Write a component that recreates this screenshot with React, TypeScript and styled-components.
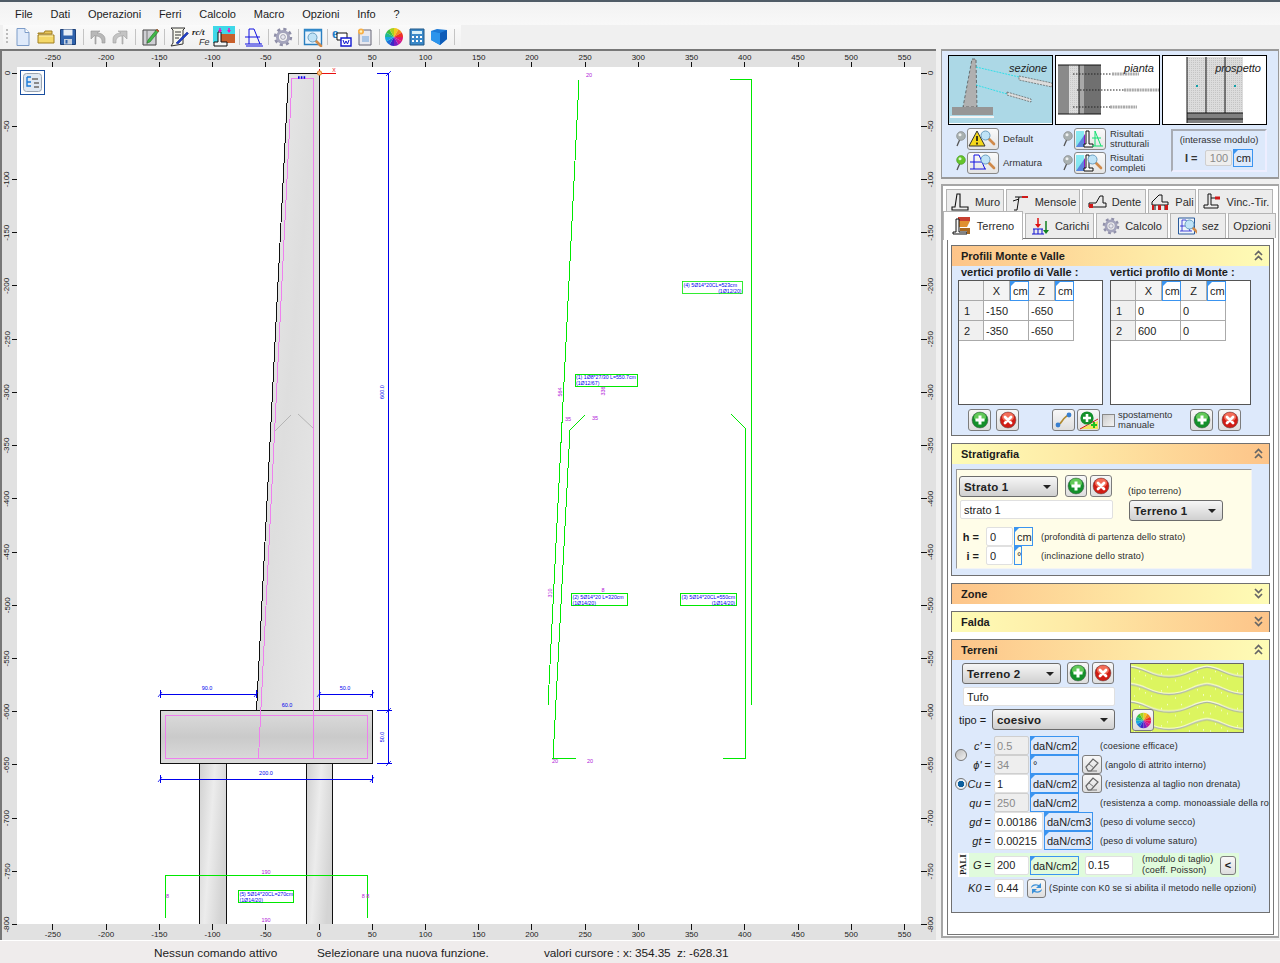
import React from 'react';
import styled, { createGlobalStyle } from 'styled-components';

const GlobalStyle = createGlobalStyle`
    html, body { margin: 0; padding: 0; background: #f0f0f0; }
    * { box-sizing: border-box; }
    body { font-family: "Liberation Sans", Arial, sans-serif; font-size: 11px; color: #1c1c1c; }
`;

/* ---------- small drawn icons ---------- */
const Ball = ({ hi, lo, cross }: { hi: string; lo: string; cross?: boolean }) => (
    <svg width="18" height="18" viewBox="0 0 18 18">
        <circle cx="9" cy="9" r="8" fill={lo} stroke="#555" strokeWidth=".5" />
        <ellipse cx="9" cy="6" rx="6" ry="4.5" fill={hi} opacity=".75" />
        {cross ? (
            <path d="M6 6l6 6M12 6l-6 6" stroke="#fff" strokeWidth="2.8" strokeLinecap="round" />
        ) : (
            <path d="M9 4.5v9M4.5 9h9" stroke="#fff" strokeWidth="3" />
        )}
    </svg>
);
const AddBall = () => <Ball hi="#7fdc6a" lo="#13902a" />;
const DelBall = () => <Ball hi="#ff8a70" lo="#d01c14" cross />;

const Gear = ({ size = 20 }: { size?: number }) => (
    <svg width={size} height={size} viewBox="0 0 20 20">
        <circle cx="10" cy="10" r="7.5" fill="none" stroke="#8f8fa8" strokeWidth="3.4" strokeDasharray="3 2.9" />
        <circle cx="10" cy="10" r="5.6" fill="none" stroke="#a4a4bc" strokeWidth="3" />
        <circle cx="10" cy="10" r="2.4" fill="#e8e8f0" stroke="#77778f" strokeWidth=".6" />
    </svg>
);
const wheelColors = ['#f2c81e', '#f28a1e', '#ee3124', '#e0186a', '#c8189a', '#7a1cc0', '#3a28c8', '#1c70d8', '#18a8e0', '#20b890', '#3cc040', '#a8d020'];
const Wheel = ({ size = 20 }: { size?: number }) => (
    <svg width={size} height={size} viewBox="0 0 20 20">
        {wheelColors.map((c, i) => {
            const a = (i * Math.PI) / 6;
            const b = ((i + 1) * Math.PI) / 6;
            const pt = (t: number) => `${10 + 9 * Math.sin(t)} ${10 - 9 * Math.cos(t)}`;
            return <path key={c} d={`M10 10L${pt(a)}A9 9 0 0 1 ${pt(b)}z`} fill={c} />;
        })}
    </svg>
);
const Lens = ({ x, y }: { x: number; y: number }) => (
    <g transform={`translate(${x} ${y})`}>
        <path d="M7 7l6 6" stroke="#d08a4a" strokeWidth="2.6" strokeLinecap="round" />
        <circle cx="4.5" cy="4.5" r="4.5" fill="#bfe3f7" stroke="#6a9ec0" />
    </g>
);
const Pin = ({ on }: { on?: boolean }) => (
    <svg width="11" height="16" viewBox="0 0 11 16">
        <path d="M5 8L2 15" stroke="#555" strokeWidth="1.3" />
        <circle cx="6" cy="5" r="4.4" fill={on ? '#63c52c' : '#a8b0b0'} stroke={on ? '#3c8a18' : '#777'} strokeWidth=".5" />
        <circle cx="5" cy="3.8" r="1.5" fill="#fff" opacity=".8" />
    </svg>
);
const WallGlyph = ({ color = '#111' }: { color?: string }) => (
    <svg width="20" height="20" viewBox="0 0 20 20">
        <path d="M7 2h3v13h8v3H2v-3h3z" fill="none" stroke={color} strokeWidth="1.1" />
    </svg>
);
const Eraser = () => (
    <svg width="16" height="16" viewBox="0 0 16 16">
        <path d="M2 10l7-8 5 4-7 8H4z" fill="none" stroke="#666" strokeWidth="1.2" />
        <path d="M5 7l5 4M4 14h9" stroke="#777" />
    </svg>
);

const toolbarIcons: Record<string, React.ReactNode> = {
    doc: (
        <svg width="20" height="20" viewBox="0 0 20 20">
            <path d="M4 1.5h8l4 4v13H4z" fill="#dfeafa" stroke="#7d9cc8" />
            <path d="M12 1.5v4h4" fill="#fff" stroke="#7d9cc8" />
        </svg>
    ),
    open: (
        <svg width="20" height="20" viewBox="0 0 20 20">
            <path d="M2 6h6l1-2h7v3H2z" fill="#e8c65c" stroke="#a07f20" />
            <path d="M2 16V8h16v8z" fill="#f4d868" stroke="#a07f20" />
            <path d="M3 9h14" stroke="#fff3b8" />
        </svg>
    ),
    save: (
        <svg width="20" height="20" viewBox="0 0 20 20">
            <path d="M2.5 2.5h15v15h-15z" fill="#2f62ac" stroke="#1d4078" />
            <path d="M5.5 2.5h9v6h-9z" fill="#e8eef6" />
            <path d="M6 12h8v5.5H6z" fill="#c4d0e0" />
            <path d="M7.5 13h2v3.5h-2z" fill="#2f62ac" />
        </svg>
    ),
    undo: (
        <svg width="20" height="20" viewBox="0 0 20 20">
            <path d="M7 17V8l-4 4V4h9l-3 2c5 0 8 3 8 6v4h-3v-2c0-3-3-5-6-5v8z" fill="#b8b8b8" stroke="#949494" strokeWidth=".6" />
        </svg>
    ),
    redo: (
        <svg width="20" height="20" viewBox="0 0 20 20">
            <path d="M13 17V8l4 4V4H8l3 2c-5 0-8 3-8 6v4h3v-2c0-3 3-5 6-5v8z" fill="#c4c4c4" stroke="#a0a0a0" strokeWidth=".6" />
        </svg>
    ),
    edit: (
        <svg width="20" height="20" viewBox="0 0 20 20">
            <path d="M3 3h13v15H3z" fill="#cfcfd4" stroke="#444" />
            <path d="M7 3v15" stroke="#777" />
            <path d="M8 13L17 2l2 2-9 11-3 1z" fill="#42b848" stroke="#226b28" strokeWidth=".6" />
            <path d="M16 3l2 2 1-1-2-2z" fill="#d83c30" />
        </svg>
    ),
    script: (
        <svg width="22" height="22" viewBox="0 0 22 22">
            <path d="M3 2h14l-2 2v14l-12 2 2-3V4z" fill="#f8f8ee" stroke="#333" />
            <path d="M7 6h6M7 9h6M7 12h4" stroke="#333" />
            <path d="M8 17L19 6l1.5 1.5L10 18z" fill="#2040c8" stroke="#102080" strokeWidth=".5" />
        </svg>
    ),
    rcfe: (
        <svg width="22" height="22" viewBox="0 0 22 22">
            <text x="1" y="9" fontSize="9" fontStyle="italic" fontWeight="700" fontFamily="Liberation Serif, serif" fill="#222">rc/t</text>
            <text x="8" y="19" fontSize="9" fontStyle="italic" fontFamily="Liberation Sans, sans-serif" fill="#333">Fe</text>
        </svg>
    ),
    terrain: (
        <svg width="22" height="22" viewBox="0 0 22 22">
            <path d="M0 0h22v17H0z" fill="#3fd8e8" />
            <path d="M6 8h16v9H8z" fill="#c8602c" />
            <path d="M5 6h3v10h6v4H1v-4h4z" fill="#f4f4f4" stroke="#111" />
            <path d="M7 2v4M16 2v4" stroke="#ee10c0" strokeWidth="1.4" />
            <path d="M5 4l2 3 2-3zM14 4l2 3 2-3z" fill="#ee10c0" />
        </svg>
    ),
    wall: (
        <svg width="20" height="20" viewBox="0 0 20 20">
            <path d="M5 2h5l6 15M5 2v15M1 10h15M1 17h17M2 19h17" fill="none" stroke="#1010e0" strokeWidth="1" />
        </svg>
    ),
    gear: <Gear />,
    search: (
        <svg width="20" height="20" viewBox="0 0 20 20">
            <path d="M1.5 2.5h17v15h-17z" fill="#eaf4fc" stroke="#2a7fc0" strokeWidth="1.4" />
            <path d="M1.5 2.5h17v2h-17z" fill="#3890d0" />
            <Lens x={5} y={6} />
        </svg>
    ),
    word: (
        <svg width="22" height="22" viewBox="0 0 22 22">
            <text x="1" y="12" fontSize="14" fontWeight="700" fontFamily="Liberation Serif, serif" fill="#2480c8">e</text>
            <path d="M6 7h10v7H6z" fill="#fff" stroke="#111" />
            <path d="M10 12h10v8H10z" fill="#fff" stroke="#1018d0" strokeWidth="1.4" />
            <path d="M12 14l1.5 4 1.5-3 1.5 3 1.5-4" fill="none" stroke="#1018d0" />
        </svg>
    ),
    page: (
        <svg width="20" height="20" viewBox="0 0 20 20">
            <path d="M4 3h12v15H4z" fill="#e8e8ee" stroke="#667" />
            <path d="M7 9h7v6H7z" fill="#a8c4e4" />
            <circle cx="6" cy="4.5" r="3" fill="#f8b048" />
            <circle cx="6" cy="4.5" r="1.2" fill="#fff4c0" />
        </svg>
    ),
    color: <Wheel />,
    calc: (
        <svg width="20" height="20" viewBox="0 0 20 20">
            <path d="M3 2h14v16H3z" fill="#3a88c8" stroke="#205888" />
            <path d="M5 4h10v3H5z" fill="#d8f0f8" />
            <path d="M5 9h2v2H5zM9 9h2v2H9zM13 9h2v2h-2zM5 13h2v2H5zM9 13h2v2H9zM13 13h2v2h-2z" fill="#fff" />
        </svg>
    ),
    cube: (
        <svg width="20" height="20" viewBox="0 0 20 20">
            <path d="M2 4l6-2 10 1v9l-7 6-9-5z" fill="#1c7ad8" />
            <path d="M2 4l9 2 7-3v9l-7 6z" fill="#0e5cb8" />
            <path d="M2 4l9 2v12l-9-5z" fill="#2c94ec" />
        </svg>
    ),
};

/* ---------- the CAD sheet ---------- */
const px = (x: number) => 319 + x * 1.0645;
const pz = (z: number) => 73 - z * 1.0645;
const xTicks = Array.from({ length: 17 }, (_, i) => -250 + i * 50);
const zTicks = Array.from({ length: 17 }, (_, i) => -i * 50);
const BLUE = '#0000ee';
const GREEN = '#00e800';
const PINK = '#ee80ee';
const MAGENTA = '#b020d8';

const SheetSvg = styled.svg`
    display: block;
    font-family: "Liberation Sans", sans-serif;
`;
const Lbl = ({ x, y, c = BLUE, r, t }: { x: number; y: number; c?: string; r?: boolean; t: string }) => (
    <text x={x} y={y} fontSize="5.5" fill={c} textAnchor="middle" transform={r ? `rotate(-90 ${x} ${y})` : undefined}>
        {t}
    </text>
);
const BarTag = ({ x, y, w, a, b, right }: { x: number; y: number; w: number; a: string; b: string; right?: boolean }) => (
    <g>
        <rect x={x} y={y} width={w} height={12} fill="#fff" stroke={GREEN} strokeWidth="1" shapeRendering="crispEdges" />
        <text x={x + 1} y={y + 5} fontSize="5.2" fill={BLUE}>{a}</text>
        <text x={right ? x + w - 1 : x + 1} y={y + 11} fontSize="5.2" fill={BLUE} textAnchor={right ? 'end' : 'start'}>{b}</text>
    </g>
);

const Sheet = () => (
    <SheetSvg width="934" height="889" viewBox="2 51 934 889">
        <defs>
            <linearGradient id="wallFill" x1="0" y1="0" x2="1" y2="1">
                <stop offset="0" stopColor="#ececec" />
                <stop offset=".5" stopColor="#dedede" />
                <stop offset="1" stopColor="#e8e8e8" />
            </linearGradient>
            <linearGradient id="footFill" x1="0" y1="0" x2="0" y2="1">
                <stop offset="0" stopColor="#dcdcdc" />
                <stop offset=".5" stopColor="#cacaca" />
                <stop offset="1" stopColor="#dcdcdc" />
            </linearGradient>
            <linearGradient id="pileFill" x1="0" y1="0" x2="1" y2=".4">
                <stop offset="0" stopColor="#d0d0d0" />
                <stop offset=".5" stopColor="#ececec" />
                <stop offset="1" stopColor="#d4d4d4" />
            </linearGradient>
        </defs>
        <rect x="2" y="51" width="934" height="889" fill="#e1e1e1" />
        <rect x="17" y="67" width="904" height="857" fill="#fff" />

        {xTicks.map((v) => (
            <g key={v}>
                <path d={`M${px(v)} 61.5V67M${px(v)} 924V929.5`} stroke="#111" strokeWidth="1" shapeRendering="crispEdges" />
                <text x={px(v)} y="60" fontSize="8" fill="#222" textAnchor="middle">{v}</text>
                <text x={px(v)} y="937" fontSize="8" fill="#222" textAnchor="middle">{v}</text>
            </g>
        ))}
        {zTicks.map((v) => (
            <g key={v}>
                <path d={`M11.5 ${pz(v)}H17M921 ${pz(v)}H926.5`} stroke="#111" strokeWidth="1" shapeRendering="crispEdges" />
                <text x="9.5" y={pz(v)} fontSize="8" fill="#222" textAnchor="middle" transform={`rotate(-90 9.5 ${pz(v)})`}>{v}</text>
                <text x="933" y={pz(v)} fontSize="8" fill="#222" textAnchor="middle" transform={`rotate(-90 933 ${pz(v)})`}>{v}</text>
            </g>
        ))}

        {/* piles */}
        <rect x="199.5" y="763" width="27" height="161" fill="url(#pileFill)" />
        <rect x="306.5" y="763" width="26" height="161" fill="url(#pileFill)" />
        <path d="M199.5 763V924M226.5 763V924M306.5 763V924M332.5 763V924" stroke="#111" strokeWidth="1" shapeRendering="crispEdges" />

        {/* wall and footing */}
        <path d="M288 73H319V711H256.5z" fill="url(#wallFill)" />
        <path d="M319.5 73.5H288.5L256.5 711M319.5 73.5V711" fill="none" stroke="#111" strokeWidth="1" shapeRendering="crispEdges" />
        <rect x="160.5" y="710.5" width="212" height="53" fill="url(#footFill)" stroke="#111" strokeWidth="1" shapeRendering="crispEdges" />
        <path d="M292 78.5H313.5V758M292 78.5L258.5 758M165.5 715.5H367.5V758.5H165.5z" fill="none" stroke={PINK} strokeWidth="1" shapeRendering="crispEdges" />
        <path d="M275 431L291 415M298 414L313 428" stroke="#aaa" strokeWidth=".8" />
        <path d="M298 77.5h8" stroke={BLUE} strokeWidth="2.4" strokeDasharray="1.6 1.2" />

        {/* axes */}
        <path d="M319 73.5H336M319.5 69V73" stroke="#e81010" strokeWidth="1" shapeRendering="crispEdges" />
        <circle cx="319.5" cy="73" r="2.2" fill="#f8c080" stroke="#e07010" strokeWidth=".8" />
        <text x="334" y="72" fontSize="7" fill="#f04040" textAnchor="middle">x</text>

        {/* dimensions */}
        <g stroke={BLUE} strokeWidth="1" fill="none" shapeRendering="crispEdges">
            <path d="M377 73.5H389M388.5 73V763M377 710.5H392M377 763.5H392" />
            <path d="M160 694.5H256M319 694.5H372M160 779.5H372" />
            <path d="M160.5 690V698M256.5 690V698M319.5 690V698M372.5 690V698M160.5 775V783M372.5 775V783" />
        </g>
        <path d="M386 76l5-5M386 713l5-5M386 766l5-5M158 697l4-5M254 697l4-5M317 697l4-5M370 697l4-5M158 782l4-5M370 782l4-5" stroke={BLUE} strokeWidth=".8" />
        <Lbl x={207} y={690} t="90.0" />
        <Lbl x={345} y={690} t="50.0" />
        <Lbl x={287} y={707} t="60.0" />
        <Lbl x={266} y={775} t="200.0" />
        <Lbl x={384} y={392} r t="600.0" />
        <Lbl x={384} y={737} r t="50.0" />

        {/* stirrup under the footing */}
        <path d="M165.5 918V875.5H367.5V918" fill="none" stroke={GREEN} strokeWidth="1" shapeRendering="crispEdges" />
        <BarTag x={238.5} y={890.5} w={55} a="(5) 5Ø14*20CL=270cm" b="          (1Ø14/20)" />
        <Lbl x={266} y={874} c={MAGENTA} t="190" />
        <Lbl x={266} y={922} c={MAGENTA} t="190" />
        <Lbl x={167.5} y={898} c={MAGENTA} t="8" />
        <Lbl x={365.5} y={898} c={MAGENTA} t="8 8" />

        {/* rebars */}
        <g stroke={GREEN} strokeWidth="1" fill="none" shapeRendering="crispEdges">
            <path d="M579 80L548 705" />
            <path d="M585 415L570 430L553 758.5H576" />
            <path d="M730 79.5H751.5V705" />
            <path d="M731 414L745.5 428.5V758.5H723" />
        </g>
        <rect x="682.5" y="281.5" width="60" height="12" fill="#fff" stroke={GREEN} strokeWidth=".8" />
        <text x="683.5" y="286.5" fontSize="5.2" fill={BLUE}>(4) 5Ø14*20CL=523cm</text>
        <text x="741.5" y="292.5" fontSize="5.2" fill={BLUE} textAnchor="end">(1Ø12/20)</text>
        <BarTag x={575} y={374} w={62} a="(1) 1Ø8*27/30 L=550.7cm" b="(1Ø12/67)" />
        <BarTag x={571.5} y={593.5} w={55.5} a="(2) 5Ø14*20 L=320cm" b="(1Ø14/20)" />
        <BarTag x={680.5} y={593.5} w={55.5} a="(3) 5Ø14*20CL=550cm" b="(1Ø14/20)" right />
        <Lbl x={589} y={77} c={MAGENTA} t="20" />
        <Lbl x={590} y={763} c={MAGENTA} t="20" />
        <Lbl x={555} y={763} c={MAGENTA} t="20" />
        <Lbl x={562} y={392} r c={MAGENTA} t="564" />
        <Lbl x={605} y={391} r c={MAGENTA} t="336" />
        <Lbl x={568} y={421} c={MAGENTA} t="35" />
        <Lbl x={595} y={420} c={MAGENTA} t="35" />
        <Lbl x={552} y={593} r c={MAGENTA} t="310" />
        <Lbl x={603} y={592} c={MAGENTA} t="8" />
    </SheetSvg>
);

/* ---------- thumbnails ---------- */
const ThumbLabel = ({ t }: { t: string }) => (
    <text x="98" y="16" fontSize="11" fontStyle="italic" textAnchor="end" fill="#222" fontFamily="Liberation Sans, sans-serif">{t}</text>
);
const Hatch = ({ id, c = '#c8c8c8' }: { id: string; c?: string }) => (
    <pattern id={id} width="2" height="2" patternUnits="userSpaceOnUse">
        <rect width="2" height="2" fill="#dcdcdc" />
        <rect width="1" height="1" fill={c} />
    </pattern>
);
const SectionThumb = () => (
    <svg width="103" height="67" viewBox="0 0 103 67">
        <rect width="103" height="67" fill="#acd8e6" />
        <path d="M23 3h4l1 48H14z" fill="#b0b0b0" stroke="#333" strokeDasharray="3 2" strokeWidth=".6" />
        <rect x="3" y="51" width="41" height="8" fill="#969696" />
        <rect x="1" y="60" width="44" height="2" fill="#f4f4f4" />
        <path d="M27 11L70 21M27 29L58 38" stroke="#10e0e8" strokeWidth=".8" strokeDasharray="2 1" />
        <path d="M70 20L103 27V31L70 24zM58 36L82 43V46L58 39z" fill="#dcdcdc" stroke="#444" strokeWidth=".6" strokeDasharray="2 1" />
        <ThumbLabel t="sezione" />
    </svg>
);
const PlanThumb = () => (
    <svg width="103" height="67" viewBox="0 0 103 67">
        <defs><Hatch id="hp" /></defs>
        <rect width="103" height="67" fill="#fff" />
        <rect x="2" y="9" width="11" height="49" fill="#8a8a8a" />
        <rect x="13" y="9" width="10" height="49" fill="url(#hp)" />
        <rect x="23" y="9" width="5" height="49" fill="#a8a8a8" />
        <rect x="28" y="9" width="17" height="49" fill="#707070" />
        <path d="M2 9H45M2 58H45M23 9V58" stroke="#111" />
        <path d="M17 18H56M21 34H68M17 51H54" stroke="#222" strokeDasharray="1.5 1.5" />
        <path d="M56 18H83M68 34H103M54 51H81" stroke="#aaa" strokeWidth="3" strokeDasharray="2 .6" />
        <ThumbLabel t="pianta" />
    </svg>
);
const FrontThumb = () => (
    <svg width="103" height="67" viewBox="0 0 103 67">
        <defs><Hatch id="hf" c="#c4c4c4" /></defs>
        <rect width="103" height="67" fill="#fff" />
        <rect x="24" y="1" width="56" height="56" fill="url(#hf)" />
        <rect x="24" y="57" width="56" height="10" fill="#808080" />
        <path d="M24 1V67M43 1V57M62 1V57M24 57H80M24 63H80" stroke="#111" />
        <rect x="33" y="29" width="2" height="2" fill="#10a0a8" />
        <rect x="71" y="29" width="2" height="2" fill="#10a0a8" />
        <ThumbLabel t="prospetto" />
    </svg>
);
const TextureSvg = styled.svg`
    display: block;
`;
const Texture = () => (
    <TextureSvg width="112" height="68" viewBox="0 0 112 68">
        <defs>
            <pattern id="wave" width="76" height="17.5" patternUnits="userSpaceOnUse">
                <path d="M-2 3C14 3 18 13 38 13S62 3 78 3" fill="none" stroke="#a8b0a8" strokeWidth="1.5" />
                <path d="M-2 2C14 2 18 12 38 12S62 2 78 2" fill="none" stroke="#fbfde0" strokeWidth="1" />
                <path d="M8 7h1v1H8zM30 9h1v1h-1zM50 5h1v1h-1zM66 8h1v1h-1zM20 14h1v1h-1zM44 16h1v1h-1zM14 11h1v1h-1zM58 14h1v1h-1zM36 5h1v1h-1zM72 13h1v1h-1zM3 14h1v1H3z" fill="#fff" />
            </pattern>
        </defs>
        <rect width="112" height="68" fill="#dcf55f" />
        <rect width="112" height="68" fill="url(#wave)" />
    </TextureSvg>
);

/* ---------- shell ---------- */
const Page = styled.div`
    position: relative;
    width: 1280px;
    height: 963px;
    display: flex;
    flex-direction: column;
    background: #f0f0f0;
    overflow: hidden;
`;
const TopLine = styled.div`
    height: 2px;
    background: #4f5b66;
`;
const MenuBar = styled.div`
    height: 23px;
    display: flex;
    align-items: center;
    gap: 17.8px;
    padding: 0 0 0 15px;
    background: linear-gradient(#f2f2f2, #f8f8f8);
    font-size: 11px;
`;
const Toolbar = styled.div`
    height: 24px;
    width: 458px;
    margin-left: 3px;
    display: flex;
    align-items: center;
    padding-left: 9px;
    position: relative;
    background: linear-gradient(#fafafa, #f0f0f0);
`;
const Grip = styled.span`
    position: absolute;
    left: 3px;
    top: 4px;
    width: 2px;
    height: 16px;
    background: repeating-linear-gradient(#bbb 0 2px, transparent 2px 4px);
`;
const ToolBtn = styled.span`
    width: 22.5px;
    height: 22px;
    display: flex;
    align-items: center;
    justify-content: center;
`;
const ToolSep = styled.span`
    width: 7px;
    height: 16px;
    flex: none;
    background: linear-gradient(#c4c4c4, #c4c4c4) center / 1px 100% no-repeat;
`;
const Workspace = styled.div`
    flex: 1;
    display: flex;
    min-height: 0;
`;
const CanvasFrame = styled.div`
    position: relative;
    width: 936px;
    height: 891px;
    border-top: 2px solid #777;
    border-left: 2px solid #777;
`;
const TreeBtn = styled.div`
    position: absolute;
    left: 18px;
    top: 19px;
    width: 25px;
    height: 25px;
    border: 1px solid #1a4f9f;
    background: #fff;
    display: flex;
    align-items: center;
    justify-content: center;
`;
const Side = styled.div`
    width: 338px;
    margin-left: 5px;
    display: flex;
    flex-direction: column;
    gap: 5px;
    height: 889px;
`;
const ViewBlock = styled.div`
    height: 130px;
    background: #dde9fb;
    border: 1px solid #999;
    border-top-width: 2px;
    border-bottom-width: 2px;
    padding: 4px 0 0 6px;
`;
const ThumbRow = styled.div`
    display: flex;
    gap: 2px;
`;
const Thumb = styled.div`
    width: 105px;
    height: 70px;
    border: 1px solid #000;
    background: #fff;
`;
const OptionArea = styled.div`
    display: flex;
    margin-top: 3px;
`;
const OptionCol = styled.div<{ $w: number }>`
    width: ${(p) => p.$w}px;
    display: flex;
    flex-direction: column;
    gap: 2px;
    padding-left: 7px;
`;
const OptionRow = styled.div`
    display: flex;
    align-items: center;
    height: 22px;
`;
const OptionBtn = styled.span`
    width: 32px;
    height: 22px;
    margin: 0 4px 0 1px;
    border: 1px solid #888;
    border-radius: 3px;
    background: linear-gradient(#fafafa, #e4e4e4);
    display: flex;
    align-items: center;
    justify-content: center;
`;
const OptionText = styled.span`
    font-size: 9.5px;
    line-height: 10px;
    color: #333;
`;
const PitchBox = styled.div`
    width: 96px;
    height: 43px;
    margin: 1px 0 0 7px;
    border: 2px solid #a8acb4;
    border-right-color: #eef;
    border-bottom-color: #eef;
    padding-top: 3px;
    text-align: center;
    font-size: 9.5px;
    color: #333;
`;
const PitchRow = styled.div`
    display: flex;
    align-items: center;
    margin: 4px 0 0 12px;
    gap: 7px;
`;
const PitchSign = styled.b`
    font-size: 11px;
`;

/* ---------- tabs ---------- */
const TabsOuter = styled.div`
    flex: 1;
    background: #fff;
    border: 2px solid #a6a6a6;
    border-right-width: 1px;
    padding-top: 3px;
    display: flex;
    flex-direction: column;
`;
const TabRow = styled.div<{ $ml: number; $h: number }>`
    display: flex;
    gap: 2px;
    margin-left: ${(p) => p.$ml}px;
    height: ${(p) => p.$h}px;
    position: relative;
`;
const Tab = styled.div<{ $w: number; $active?: boolean }>`
    width: ${(p) => p.$w}px;
    height: ${(p) => (p.$active ? 29 : 25)}px;
    margin-top: ${(p) => (p.$active ? -2 : 0)}px;
    display: flex;
    align-items: center;
    justify-content: center;
    gap: 5px;
    font-size: 11px;
    color: #2c2c2c;
    background: ${(p) => (p.$active ? '#fff' : '#ececec')};
    border: 1px solid #b4b4b4;
    border-bottom: none;
    position: relative;
    z-index: ${(p) => (p.$active ? 2 : 1)};
`;
const Content = styled.div`
    margin-left: 4px;
    width: 327px;
    height: 697px;
    border: 1px solid #777;
    padding: 6px 0 0 3px;
    display: flex;
    flex-direction: column;
    gap: 7px;
    background: #fff;
`;
const Section = styled.section<{ $h: number }>`
    width: 319px;
    height: ${(p) => p.$h}px;
    border: 1px solid #707070;
    background: #dde9fb;
`;
const SectionHead = styled.header<{ $flip?: boolean }>`
    height: 20px;
    display: flex;
    align-items: center;
    justify-content: space-between;
    padding: 0 6px 1px 9px;
    font-size: 11px;
    font-weight: 700;
    color: #1c1c1c;
    background: linear-gradient(${(p) => (p.$flip ? '270deg' : '90deg')}, #fdc489, #feeaa6 62%, #fefcb6);
`;
const Chevrons = ({ up }: { up?: boolean }) => (
    <svg width="9" height="11" viewBox="0 0 9 11">
        <path
            d={up ? 'M1 5l3.5-3.5L8 5M1 10l3.5-3.5L8 10' : 'M1 1l3.5 3.5L8 1M1 6l3.5 3.5L8 6'}
            fill="none"
            stroke="#666"
            strokeWidth="1.7"
        />
    </svg>
);
const Head = ({ t, up, flip }: { t: string; up?: boolean; flip?: boolean }) => (
    <SectionHead $flip={flip}>
        {t}
        <Chevrons up={up} />
    </SectionHead>
);

/* ---------- shared form parts ---------- */
const Unit = styled.span<{ $w: number; $ml?: number; $h?: number }>`
    position: relative;
    width: ${(p) => p.$w}px;
    height: ${(p) => p.$h ?? 19}px;
    margin-left: ${(p) => p.$ml ?? 0}px;
    flex: none;
    border: 1px solid #3a94f0;
    padding-left: 2px;
    font-size: 11px;
    line-height: ${(p) => (p.$h ?? 19) - 1}px;
    color: #222;
    &::before {
        content: '';
        position: absolute;
        left: 0;
        top: 0;
        border-top: 4px solid #3a94f0;
        border-right: 4px solid transparent;
    }
`;
const Field = styled.input<{ $w: number; $ml?: number; $pl?: number; $h?: number; $center?: boolean }>`
    width: ${(p) => p.$w}px;
    height: ${(p) => p.$h ?? 19}px;
    margin-left: ${(p) => p.$ml ?? 0}px;
    flex: none;
    padding: 0 0 0 ${(p) => p.$pl ?? 2}px;
    border: 1px solid #e0e0e0;
    border-radius: 2px;
    background: #fff;
    font: 11px "Liberation Sans", Arial, sans-serif;
    text-align: ${(p) => (p.$center ? 'center' : 'left')};
    color: #222;
    outline: none;
    &:disabled {
        background: #eeeeee;
        border-color: #cfcfcf;
        color: #8a8a8a;
    }
`;
const Select = styled.div<{ $w: number; $ml?: number }>`
    position: relative;
    width: ${(p) => p.$w}px;
    height: 21px;
    margin-left: ${(p) => p.$ml ?? 0}px;
    flex: none;
    padding-left: 4px;
    border: 1px solid #6c6c6c;
    border-radius: 3px;
    background: linear-gradient(#f6f6f6, #d0d0d0);
    font-size: 11.5px;
    font-weight: 700;
    line-height: 20px;
    letter-spacing: 0.2px;
    color: #222;
    &::after {
        content: '';
        position: absolute;
        right: 6px;
        top: 8px;
        border-top: 4px solid #222;
        border-left: 4px solid transparent;
        border-right: 4px solid transparent;
    }
`;
const IconBtn = styled.span<{ $w?: number; $h?: number; $ml?: number; $mr?: number }>`
    width: ${(p) => p.$w ?? 23}px;
    height: ${(p) => p.$h ?? 22}px;
    margin-left: ${(p) => p.$ml ?? 0}px;
    margin-right: ${(p) => p.$mr ?? 0}px;
    flex: none;
    display: flex;
    align-items: center;
    justify-content: center;
    border: 1px solid #7c7c7c;
    border-radius: 3px;
    background: linear-gradient(#f8f8f8, #dedede);
    font-size: 11px;
    font-weight: 700;
`;
const Note = styled.span<{ $ml?: number }>`
    margin-left: ${(p) => p.$ml ?? 0}px;
    font-size: 9px;
    letter-spacing: 0.13px;
    white-space: nowrap;
    color: #2a2a2a;
`;

/* ---------- Profili ---------- */
const ProfileCols = styled.div`
    display: grid;
    grid-template-columns: 152px 1fr;
    padding-left: 6px;
`;
const ColTitle = styled.div<{ $ml: number }>`
    height: 14px;
    margin-left: ${(p) => p.$ml}px;
    font-size: 11px;
    font-weight: 700;
    line-height: 12px;
`;
const TableBox = styled.div<{ $w: number }>`
    width: ${(p) => p.$w}px;
    height: 125px;
    border: 1px solid #555;
    background: #fff;
`;
const VertexGrid = styled.div`
    display: grid;
    grid-template-columns: 25px 26px 19px 26px 19px;
    grid-auto-rows: 20px;
    width: 116px;
`;
const HeadCell = styled.div`
    background: #f0f0f0;
    border-right: 1px solid #aaa;
    border-bottom: 1px solid #aaa;
    display: flex;
    align-items: center;
    padding-left: 5px;
    font-size: 11px;
`;
const AxisCell = styled(HeadCell)`
    justify-content: center;
    padding: 0;
    background: #f4f4f4;
`;
const ValueCell = styled.div`
    grid-column: span 2;
    border-right: 1px solid #aaa;
    border-bottom: 1px solid #aaa;
    padding-left: 2px;
    font-size: 11px;
    line-height: 21px;
`;
const ProfileTools = styled.div`
    display: flex;
    align-items: center;
    height: 27px;
    padding: 3px 0 0 16px;
`;
const ToolGap = styled.span<{ $w: number }>`
    width: ${(p) => p.$w}px;
    flex: none;
`;
const Check = styled.span`
    width: 13px;
    height: 13px;
    margin: 0 3px 0 2px;
    flex: none;
    border: 1px solid #888;
    background: linear-gradient(135deg, #ccc, #f4f4f4);
`;
const CheckText = styled.span`
    width: 72px;
    font-size: 9.5px;
    line-height: 10.5px;
    color: #333;
`;

const VertexTable = ({ rows }: { rows: [string, string][] }) => (
    <VertexGrid>
        <HeadCell />
        <AxisCell>X</AxisCell>
        <Unit $w={19} $h={20}>cm</Unit>
        <AxisCell>Z</AxisCell>
        <Unit $w={19} $h={20}>cm</Unit>
        {rows.map((r, i) => (
            <React.Fragment key={i}>
                <HeadCell>{i + 1}</HeadCell>
                <ValueCell>{r[0]}</ValueCell>
                <ValueCell>{r[1]}</ValueCell>
            </React.Fragment>
        ))}
    </VertexGrid>
);

/* ---------- Stratigrafia ---------- */
const CreamBox = styled.div`
    width: 296px;
    height: 100px;
    margin: 5px 0 0 4px;
    padding: 5px 0 0 2px;
    background: #fffde8;
    border: 1px solid #f4f4f4;
    border-top-color: #999;
    border-left-color: #999;
`;
const CreamTop = styled.div`
    display: flex;
`;
const ColStack = styled.div<{ $w: number; $ml?: number }>`
    width: ${(p) => p.$w}px;
    margin-left: ${(p) => p.$ml ?? 0}px;
    display: flex;
    flex-direction: column;
    gap: 3px;
`;
const InlineRow = styled.div<{ $gap?: number; $ml?: number }>`
    display: flex;
    align-items: center;
    gap: ${(p) => p.$gap ?? 3}px;
    margin-left: ${(p) => p.$ml ?? 0}px;
`;
const Hint = styled.div`
    margin-top: 11px;
    height: 11px;
    font-size: 9px;
    letter-spacing: 0.13px;
    color: #2a2a2a;
`;
const DepthRow = styled.div<{ $mt?: number }>`
    display: flex;
    align-items: center;
    height: 19px;
    margin-top: ${(p) => p.$mt ?? 0}px;
`;
const DepthLabel = styled.span`
    width: 20px;
    margin-right: 7px;
    text-align: right;
    font-weight: 700;
    font-size: 11px;
`;
const UnitSlot = styled.span`
    width: 27px;
    margin-left: 1px;
    flex: none;
    display: flex;
`;

/* ---------- Terreni ---------- */
const SoilTop = styled.div`
    display: flex;
    padding: 2px 0 0 10px;
`;
const SoilStack = styled.div`
    width: 153px;
    display: flex;
    flex-direction: column;
    gap: 3px;
`;
const TipoLabel = styled.span`
    width: 30px;
    font-size: 11px;
`;
const TextureBox = styled.div`
    position: relative;
    width: 114px;
    height: 70px;
    margin: 1px 0 0 15px;
    border: 1px solid #666;
`;
const WheelBtn = styled(IconBtn)`
    position: absolute;
    left: 1px;
    bottom: 1px;
`;
const SoilGrid = styled.div`
    display: grid;
    grid-template-columns: 15px 1fr;
    grid-auto-rows: 19px;
    margin-top: 3px;
`;
const RadioCell = styled.div<{ $span: number }>`
    grid-column: 1;
    grid-row: span ${(p) => p.$span};
    display: flex;
    align-items: center;
    justify-content: flex-end;
`;
const Radio = styled.span<{ $on?: boolean }>`
    width: 12px;
    height: 12px;
    border-radius: 50%;
    border: 1px solid #777;
    background: ${(p) =>
        p.$on ? 'radial-gradient(circle, #0d5f9e 0 3px, #e8eef4 3.4px)' : 'linear-gradient(135deg, #bbb, #f4f4f4)'};
`;
const SoilRow = styled.div`
    grid-column: 2;
    display: flex;
    align-items: center;
    overflow: hidden;
`;
const SoilLabel = styled.span`
    width: 24px;
    margin-right: 3px;
    flex: none;
    text-align: right;
    white-space: nowrap;
    font-size: 11px;
    color: #222;
    i {
        font-style: italic;
    }
`;
const Pali = styled.span`
    width: 11px;
    height: 24px;
    flex: none;
    background: #fff;
    writing-mode: vertical-rl;
    transform: rotate(180deg);
    text-align: center;
    font: 700 9px "Liberation Serif", serif;
`;
const PaliRow = styled.div`
    display: flex;
    align-items: center;
    width: 281px;
    height: 24px;
    margin: 3px 0 0 6px;
    background: #e0fbdc;
    position: relative;
`;
const PaliLabel = styled(SoilLabel)`
    width: 22px;
`;
const TwoLine = styled.span`
    margin-left: 9px;
    width: 78px;
    font-size: 9px;
    line-height: 11px;
    letter-spacing: 0.13px;
    color: #2a2a2a;
`;
const KRow = styled.div`
    display: flex;
    align-items: center;
    height: 20px;
    margin: 1px 0 0 15px;
`;
const StatusBar = styled.div`
    height: 23px;
    display: flex;
    align-items: center;
    padding: 1px 0 0 154px;
    border-top: 1px solid #fff;
    background: #efecec;
    font-size: 11.8px;
`;
const StatusText = styled.span<{ $w: number }>`
    width: ${(p) => p.$w}px;
    white-space: pre;
`;
const CursorText = styled(StatusText)`
    letter-spacing: -0.1px;
`;

type Soil = { label: string; value: string; w: number; unit: string; unitW: number; note: string; ml: number; off?: boolean; tool?: boolean };
const firstSoils: Soil[] = [
    { label: "c' =", value: '0.5', w: 35, unit: 'daN/cm2', unitW: 49, note: '(coesione efficace)', ml: 21, off: true },
    { label: "ϕ' =", value: '34', w: 35, unit: '°', unitW: 49, note: '(angolo di attrito interno)', ml: 3, off: true, tool: true },
];
const restSoils: Soil[] = [
    { label: 'qu =', value: '250', w: 35, unit: 'daN/cm2', unitW: 49, note: '(resistenza a comp. monoassiale della roccia)', ml: 21, off: true },
    { label: 'gd =', value: '0.00186', w: 49, unit: 'daN/cm3', unitW: 49, note: '(peso di volume secco)', ml: 7 },
    { label: 'gt =', value: '0.00215', w: 49, unit: 'daN/cm3', unitW: 49, note: '(peso di volume saturo)', ml: 7 },
];
const SoilLine = ({ s }: { s: Soil }) => (
    <SoilRow>
        <SoilLabel><i>{s.label.split(' =')[0]}</i> =</SoilLabel>
        <Field readOnly disabled={s.off} $w={s.w} value={s.value} />
        <Unit $w={s.unitW} $ml={1}>{s.unit}</Unit>
        {s.tool && (
            <IconBtn $w={20} $h={19} $ml={3}>
                <Eraser />
            </IconBtn>
        )}
        <Note $ml={s.ml}>{s.note}</Note>
    </SoilRow>
);

const OptionIcon = ({ kind }: { kind: string }) => (
    <svg width="30" height="20" viewBox="0 0 30 20">
        {kind === 'warn' && <path d="M9 2L17 17H1z" fill="#f6d818" stroke="#333" />}
        {kind === 'warn' && <path d="M9 7v5M9 13.5v2" stroke="#111" strokeWidth="1.6" />}
        {kind === 'arm' && <path d="M6 2h5l6 14M6 2v14M2 9h13M2 16h16" fill="none" stroke="#1010e0" />}
        {kind !== 'warn' && kind !== 'arm' && (
            <>
                <path d="M1 18h9V5z" fill="#9018c8" />
                <rect x="1" y="2" width="8" height="16" fill="#30e0f0" opacity=".55" />
                <path d="M11 2h3v13h4v3h-9v-3h2z" fill="#f8f8f8" stroke="#111" />
            </>
        )}
        {kind === 'struct' && <path d="M20 2l6 15M20 2v15M17 9h9M17 17h11" stroke="#10e070" fill="none" />}
        {kind !== 'struct' && <Lens x={13} y={2} />}
    </svg>
);

const App = () => (
    <Page>
        <GlobalStyle />
        <TopLine />
        <MenuBar>
            {['File', 'Dati', 'Operazioni', 'Ferri', 'Calcolo', 'Macro', 'Opzioni', 'Info', '?'].map((m) => (
                <span key={m}>{m}</span>
            ))}
        </MenuBar>
        <Toolbar>
            <Grip />
            {[
                ['doc', 'open', 'save'],
                ['undo', 'redo'],
                ['edit'],
                ['script', 'rcfe', 'terrain'],
                ['wall'],
                ['gear'],
                ['search'],
                ['word', 'page'],
                ['color', 'calc', 'cube'],
            ].map((group, i) => (
                <React.Fragment key={i}>
                    {group.map((k) => (
                        <ToolBtn key={k}>{toolbarIcons[k]}</ToolBtn>
                    ))}
                    <ToolSep />
                </React.Fragment>
            ))}
        </Toolbar>
        <Workspace>
            <CanvasFrame>
                <Sheet />
                <TreeBtn>
                    <svg width="21" height="21" viewBox="0 0 21 21">
                        <rect x="1.5" y="1.5" width="18" height="18" rx="3" fill="#dfe8f2" stroke="#9aa4b0" />
                        <path d="M5 5h4M5 5v9h4M5 10h4" stroke="#1a7ad8" strokeWidth="1.4" fill="none" />
                        <path d="M10 7h6M12 11h5M12 15h5" stroke="#8a8a8a" strokeWidth="2" />
                    </svg>
                </TreeBtn>
            </CanvasFrame>
            <Side>
                <ViewBlock>
                    <ThumbRow>
                        <Thumb><SectionThumb /></Thumb>
                        <Thumb><PlanThumb /></Thumb>
                        <Thumb><FrontThumb /></Thumb>
                    </ThumbRow>
                    <OptionArea>
                        <OptionCol $w={107}>
                            <OptionRow>
                                <Pin />
                                <OptionBtn><OptionIcon kind="warn" /></OptionBtn>
                                <OptionText>Default</OptionText>
                            </OptionRow>
                            <OptionRow>
                                <Pin on />
                                <OptionBtn><OptionIcon kind="arm" /></OptionBtn>
                                <OptionText>Armatura</OptionText>
                            </OptionRow>
                        </OptionCol>
                        <OptionCol $w={109}>
                            <OptionRow>
                                <Pin />
                                <OptionBtn><OptionIcon kind="struct" /></OptionBtn>
                                <OptionText>Risultati<br />strutturali</OptionText>
                            </OptionRow>
                            <OptionRow>
                                <Pin />
                                <OptionBtn><OptionIcon kind="full" /></OptionBtn>
                                <OptionText>Risultati<br />completi</OptionText>
                            </OptionRow>
                        </OptionCol>
                        <PitchBox>
                            (interasse modulo)
                            <PitchRow>
                                <PitchSign>I =</PitchSign>
                                <InlineRow $gap={1}>
                                    <Field readOnly disabled $w={27} $h={16} $center value="100" />
                                    <Unit $w={20} $h={18}>cm</Unit>
                                </InlineRow>
                            </PitchRow>
                        </PitchBox>
                    </OptionArea>
                </ViewBlock>
                <TabsOuter>
                    <TabRow $ml={3} $h={24}>
                        <Tab $w={58}><WallGlyph />Muro</Tab>
                        <Tab $w={74}>
                            <svg width="20" height="20" viewBox="0 0 20 20">
                                <path d="M7 18l2-13h9M5 5h4M3 9l6-2M7 18h-3" fill="none" stroke="#111" />
                                <path d="M12 4h6v2h-6z" fill="#d01818" />
                            </svg>
                            Mensole
                        </Tab>
                        <Tab $w={64}>
                            <svg width="20" height="20" viewBox="0 0 20 20">
                                <path d="M2 15V11h7l4-7h3v7h3v4z" fill="none" stroke="#111" />
                                <path d="M2 12h4v4H2z" fill="#d01818" />
                            </svg>
                            Dente
                        </Tab>
                        <Tab $w={48}>
                            <svg width="20" height="20" viewBox="0 0 20 20">
                                <path d="M2 10L9 3h3v7h6v3H2zM5 13v5M15 13v5" fill="none" stroke="#111" />
                                <path d="M2 13h2v5H2zM8 13h3v5H8zM15 13h3v5h-3z" fill="#d01818" />
                            </svg>
                            Pali
                        </Tab>
                        <Tab $w={75}>
                            <svg width="20" height="20" viewBox="0 0 20 20">
                                <path d="M6 2h3v11h7v3H2v-3h4zM9 6h4" fill="none" stroke="#111" />
                                <path d="M13 4.5h5v3h-5z" fill="#d01818" />
                            </svg>
                            Vinc.-Tir.
                        </Tab>
                    </TabRow>
                    <TabRow $ml={0} $h={25}>
                        <Tab $w={80} $active>
                            <svg width="20" height="20" viewBox="0 0 20 20">
                                <path d="M6 1h12v4H6z" fill="#c84030" />
                                <path d="M7 5h11l-3 6H7z" fill="#e09030" />
                                <path d="M4 3h3v13h8v2H1v-2h3z" fill="#f4f4f4" stroke="#111" />
                                <path d="M8 12h10v6h-3v-3H8z" fill="#a86820" />
                            </svg>
                            Terreno
                        </Tab>
                        <Tab $w={69}>
                            <svg width="20" height="20" viewBox="0 0 20 20">
                                <path d="M3 13h10M2 18h12M4 13v5M8 13v5M12 13v5" stroke="#1010d0" fill="none" />
                                <path d="M8 2v7" stroke="#e01010" strokeWidth="1.5" />
                                <path d="M5 8l3 4 3-4z" fill="#e01010" />
                                <path d="M16 5v10" stroke="#108020" strokeWidth="1.5" />
                                <path d="M13 14l3 4 3-4z" fill="#108020" />
                            </svg>
                            Carichi
                        </Tab>
                        <Tab $w={72}><Gear size={18} />Calcolo</Tab>
                        <Tab $w={56}>
                            <svg width="20" height="20" viewBox="0 0 20 20">
                                <path d="M1.5 2h16v16h-16z" fill="#eef4fb" stroke="#2a5a9a" />
                                <path d="M5 4h4l4 11M5 4v11M3 10h10M3 15h12" fill="none" stroke="#2020d0" strokeWidth=".8" />
                                <Lens x={8} y={4} />
                            </svg>
                            sez
                        </Tab>
                        <Tab $w={48}>Opzioni</Tab>
                    </TabRow>
                    <Content>
                        <Section $h={191}>
                            <Head t="Profili Monte e Valle" up />
                            <ProfileCols>
                                <div>
                                    <ColTitle $ml={3}>vertici profilo di Valle :</ColTitle>
                                    <TableBox $w={145}>
                                        <VertexTable rows={[['-150', '-650'], ['-350', '-650']]} />
                                    </TableBox>
                                </div>
                                <div>
                                    <ColTitle $ml={0}>vertici profilo di Monte :</ColTitle>
                                    <TableBox $w={141}>
                                        <VertexTable rows={[['0', '0'], ['600', '0']]} />
                                    </TableBox>
                                </div>
                            </ProfileCols>
                            <ProfileTools>
                                <IconBtn><AddBall /></IconBtn>
                                <ToolGap $w={5} />
                                <IconBtn><DelBall /></IconBtn>
                                <ToolGap $w={33} />
                                <IconBtn>
                                    <svg width="18" height="18" viewBox="0 0 18 18">
                                        <path d="M2 14c5 0 5-8 12-10" fill="none" stroke="#b08a30" strokeWidth="1.6" />
                                        <circle cx="3" cy="14" r="2.4" fill="#3a80d0" />
                                        <circle cx="14" cy="4" r="2.4" fill="#3a80d0" />
                                    </svg>
                                </IconBtn>
                                <ToolGap $w={2} />
                                <IconBtn>
                                    <svg width="20" height="20" viewBox="0 0 20 20">
                                        <path d="M1 19L19 11v8z" fill="#f4e460" />
                                        <path d="M1 19L19 9" stroke="#d01818" />
                                        <circle cx="8" cy="8" r="6.6" fill="#13902a" />
                                        <path d="M8 4v8M4 8h8" stroke="#fff" strokeWidth="2.6" />
                                        <path d="M15 12v6M12 15h6" stroke="#20c020" strokeWidth="2" />
                                    </svg>
                                </IconBtn>
                                <Check />
                                <CheckText>spostamento manuale</CheckText>
                                <IconBtn><AddBall /></IconBtn>
                                <ToolGap $w={5} />
                                <IconBtn><DelBall /></IconBtn>
                            </ProfileTools>
                        </Section>

                        <Section $h={133}>
                            <Head t="Stratigrafia" up flip />
                            <CreamBox>
                                <CreamTop>
                                    <ColStack $w={156}>
                                        <InlineRow>
                                            <Select $w={99}>Strato 1</Select>
                                            <ToolGap $w={1} />
                                            <IconBtn $w={22}><AddBall /></IconBtn>
                                            <IconBtn $w={22}><DelBall /></IconBtn>
                                        </InlineRow>
                                        <Field readOnly $w={153} $ml={1} $pl={3} value="strato 1" />
                                    </ColStack>
                                    <ColStack $w={100} $ml={13}>
                                        <Hint>(tipo terreno)</Hint>
                                        <Select $w={94} $ml={1}>Terreno 1</Select>
                                    </ColStack>
                                </CreamTop>
                                <DepthRow $mt={6}>
                                    <DepthLabel>h =</DepthLabel>
                                    <Field readOnly $w={27} $pl={3} value="0" />
                                    <UnitSlot><Unit $w={19}>cm</Unit></UnitSlot>
                                    <Note>(profondità di partenza dello strato)</Note>
                                </DepthRow>
                                <DepthRow>
                                    <DepthLabel>i =</DepthLabel>
                                    <Field readOnly $w={27} $pl={3} value="0" />
                                    <UnitSlot><Unit $w={8}>°</Unit></UnitSlot>
                                    <Note>(inclinazione dello strato)</Note>
                                </DepthRow>
                            </CreamBox>
                        </Section>

                        <Section $h={21}>
                            <Head t="Zone" />
                        </Section>
                        <Section $h={21}>
                            <Head t="Falda" flip />
                        </Section>

                        <Section $h={274}>
                            <Head t="Terreni" up />
                            <SoilTop>
                                <SoilStack>
                                    <InlineRow>
                                        <Select $w={99}>Terreno 2</Select>
                                        <ToolGap $w={0} />
                                        <IconBtn $w={22}><AddBall /></IconBtn>
                                        <IconBtn $w={22}><DelBall /></IconBtn>
                                    </InlineRow>
                                    <Field readOnly $w={152} $ml={1} $pl={3} value="Tufo" />
                                    <InlineRow $ml={-3}>
                                        <TipoLabel>tipo =</TipoLabel>
                                        <Select $w={123}>coesivo</Select>
                                    </InlineRow>
                                </SoilStack>
                                <TextureBox>
                                    <Texture />
                                    <WheelBtn $h={22} $w={22}><Wheel size={17} /></WheelBtn>
                                </TextureBox>
                            </SoilTop>
                            <SoilGrid>
                                <RadioCell $span={2}><Radio /></RadioCell>
                                <SoilLine s={firstSoils[0]} />
                                <SoilLine s={firstSoils[1]} />
                                <RadioCell $span={1}><Radio $on /></RadioCell>
                                <SoilLine s={{ label: 'Cu =', value: '1', w: 35, unit: 'daN/cm2', unitW: 49, note: '(resistenza al taglio non drenata)', ml: 3, tool: true }} />
                                {restSoils.map((s) => (
                                    <SoilLine key={s.label} s={s} />
                                ))}
                            </SoilGrid>
                            <PaliRow>
                                <Pali>PALI</Pali>
                                <PaliLabel><i>G</i> =</PaliLabel>
                                <Field readOnly $w={35} value="200" />
                                <Unit $w={49} $ml={1}>daN/cm2</Unit>
                                <Field readOnly $w={48} $ml={6} value="0.15" />
                                <TwoLine>(modulo di taglio)<br />(coeff. Poisson)</TwoLine>
                                <IconBtn $w={16} $h={19}>&lt;</IconBtn>
                            </PaliRow>
                            <KRow>
                                <SoilLabel><i>K0</i> =</SoilLabel>
                                <Field readOnly $w={30} value="0.44" />
                                <IconBtn $w={19} $h={19} $ml={3} $mr={3}>
                                    <svg width="15" height="15" viewBox="0 0 15 15">
                                        <path d="M2 7c0-3 4-5 8-3l2-2v5H7l2-2c-3-1-5 0-7 2z" fill="#3a90d8" />
                                        <path d="M13 8c0 3-4 5-8 3l-2 2V8h5l-2 2c3 1 5 0 7-2z" fill="#3a90d8" />
                                    </svg>
                                </IconBtn>
                                <Note>(Spinte con K0 se si abilita il metodo nelle opzioni)</Note>
                            </KRow>
                        </Section>
                    </Content>
                </TabsOuter>
            </Side>
        </Workspace>
        <StatusBar>
            <StatusText $w={163}>Nessun comando attivo</StatusText>
            <StatusText $w={227}>Selezionare una nuova funzione.</StatusText>
            <CursorText $w={200}>valori cursore : x: 354.35  z: -628.31</CursorText>
        </StatusBar>
    </Page>
);

export default App;
